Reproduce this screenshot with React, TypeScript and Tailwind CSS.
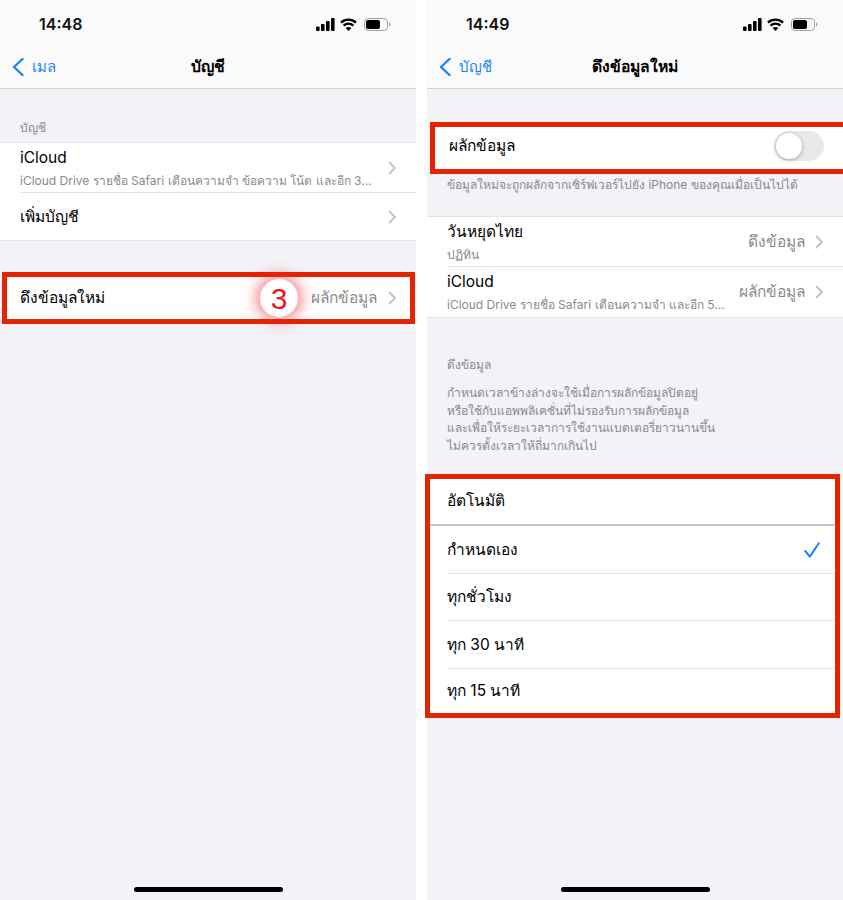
import React from "react";

const FONT = "font-['Inter','Noto_Sans','Liberation_Sans',sans-serif]";

function StatusIcons() {
  return (
    <div className="flex items-center gap-[5px]">
      <svg width="19" height="13" viewBox="0 0 19 13" fill="#000">
        <rect x="0" y="8.5" width="3.6" height="4.5" rx="0.9" />
        <rect x="5" y="6" width="3.6" height="7" rx="0.9" />
        <rect x="10" y="3" width="3.6" height="10" rx="0.9" />
        <rect x="15" y="0" width="3.6" height="13" rx="0.9" />
      </svg>
      <svg width="17" height="13" viewBox="0 0 17 13" fill="none" stroke="#000" strokeWidth="2.4">
        <path d="M1 4.6C5.2 .6 11.8 .6 16 4.6" />
        <path d="M3.6 7.6C6.4 5 10.6 5 13.4 7.6" />
        <path d="M8.5 13L5.6 10c1.6-1.4 4.2-1.4 5.8 0z" fill="#000" stroke="none" />
      </svg>
      <svg width="27" height="13" viewBox="0 0 27 13" fill="none" className="ml-[2px]">
        <rect x="0.5" y="0.5" width="23" height="12" rx="3.5" stroke="#a3a3a3" />
        <rect x="2" y="2" width="14" height="9" rx="2" fill="#000" />
        <path d="M25 4.5c1 .3 1.4 1 1.4 2s-.4 1.7-1.4 2z" fill="#a3a3a3" />
      </svg>
    </div>
  );
}

function Chevron() {
  return (
    <svg width="8" height="14" viewBox="0 0 8 14" fill="none" stroke="#c4c4c7" strokeWidth="2" className="shrink-0">
      <path d="M1 1l6 6-6 6" />
    </svg>
  );
}

function Header({ time, back, title }: { time: string; back: string; title: string }) {
  return (
    <div className="h-[89px] shrink-0 bg-[#fafafa] border-b border-[#d1d1d4] flex flex-col">
      <div className="h-[47px] flex items-center justify-between pl-[39px] pr-[25px] pt-[1px]">
        <span className="text-[16px] font-semibold text-[#111]">{time}</span>
        <StatusIcons />
      </div>
      <div className="relative flex-1 flex items-center justify-center">
        <div className="absolute left-[12px] top-[9px] flex items-center gap-[8px]">
          <svg width="12" height="20" viewBox="0 0 12 20" fill="none" stroke="#1a84ff" strokeWidth="2.4" strokeLinecap="round" strokeLinejoin="round">
            <path d="M10.5 2L2 10l8.5 8" />
          </svg>
          <span className="text-[15px] text-[#1a84ff]">{back}</span>
        </div>
        <span className="text-[15.7px] font-semibold text-black -mt-[2px]">{title}</span>
      </div>
    </div>
  );
}

function Two({ title, sub, value, h }: { title: string; sub: string; value?: string; h: string }) {
  return (
    <div className={`${h} flex items-center pr-[20px]`}>
      <div className="flex-1 min-w-0 pt-[1px]">
        <div className="text-[15.5px] leading-[22px] text-black">{title}</div>
        <div className="mt-[3px] text-[12px] leading-[18px] text-[#8a8a8e] whitespace-nowrap">{sub}</div>
      </div>
      {value && <span className="text-[15.5px] text-[#8a8a8e] ml-[10px] mr-[10px] whitespace-nowrap">{value}</span>}
      {!value && <span className="w-[10px]" />}
      <Chevron />
    </div>
  );
}

function Left() {
  return (
    <div className="relative flex flex-col bg-[#f2f2f7] h-[900px]">
      <Header time="14:48" back="เมล" title="บัญชี" />
      <div className="pt-[30px] pl-[20px] h-[53px] text-[12px] leading-[18px] text-[#8a8a8e]">บัญชี</div>
      <div className="bg-white border-y border-[#e4e4e6] pl-[20px]">
        <div className="border-b border-[#e4e4e6]">
          <Two h="h-[49px]" title="iCloud" sub="iCloud Drive รายชื่อ Safari เตือนความจำ ข้อความ โน้ต และอีก 3..." />
        </div>
        <div className="h-[47px] flex items-center justify-between pr-[20px]">
          <span className="text-[15.5px] text-black">เพิ่มบัญชี</span>
          <Chevron />
        </div>
      </div>
      <div className="mt-[31px] ml-[2px] mr-[1px] h-[52px] bg-white border-[5px] border-[#e32400] pl-[13px] pr-[14px] flex items-center relative">
        <span className="flex-1 text-[15.5px] text-black">ดึงข้อมูลใหม่</span>
        <span className="text-[15.5px] text-[#8a8a8e] mr-[11px]">ผลักข้อมูล</span>
        <Chevron />
        <div className="absolute left-[253px] top-[2px] w-[38px] h-[38px] rounded-full bg-white flex items-center justify-center text-[#f0141e] text-[30px] shadow-[0_0_14px_4px_rgba(240,30,40,0.55)] font-['Liberation_Sans',sans-serif]">
          3
        </div>
      </div>
      <HomeBar />
    </div>
  );
}

function HomeBar() {
  return <div className="absolute left-[134px] bottom-[8px] w-[149px] h-[5px] rounded-full bg-black" />;
}

function Right() {
  const opts = [
    { t: "กำหนดเอง", h: "h-[48px]" },
    { t: "ทุกชั่วโมง", h: "h-[47px]" },
    { t: "ทุก 30 นาที", h: "h-[48px]" },
    { t: "ทุก 15 นาที", h: "h-[44px]" },
  ];
  return (
    <div className="relative flex flex-col bg-[#f2f2f7] h-[900px]">
      <Header time="14:49" back="บัญชี" title="ดึงข้อมูลใหม่" />
      <div className="h-[33px]" />
      <div className="h-[52px] ml-[3px] bg-white border-[5px] border-[#e32400] border-r-0 pl-[14px] pr-[19px] pb-[4px] flex items-center justify-between">
        <span className="text-[15.5px] text-black">ผลักข้อมูล</span>
        <div className="w-[50px] h-[30px] rounded-full bg-[#e9e9ea] p-[2px]">
          <div className="w-[26px] h-[26px] rounded-full bg-white shadow-[0_1px_4px_rgba(0,0,0,0.3)]" />
        </div>
      </div>
      <div className="h-[42px] pl-[20px] pt-[2px] text-[12px] leading-[18px] text-[#8a8a8e]">
        ข้อมูลใหม่จะถูกผลักจากเซิร์ฟเวอร์ไปยัง iPhone ของคุณเมื่อเป็นไปได้
      </div>
      <div className="bg-white border-y border-[#e4e4e6] pl-[20px]">
        <div className="border-b border-[#e4e4e6]">
          <Two h="h-[49px]" title="วันหยุดไทย" sub="ปฏิทิน" value="ดึงข้อมูล" />
        </div>
        <Two h="h-[50px]" title="iCloud" sub="iCloud Drive รายชื่อ Safari เตือนความจำ และอีก 5..." value="ผลักข้อมูล" />
      </div>
      <div className="pt-[38px] pl-[20px] text-[12px] leading-[18px] text-[#8a8a8e]">ดึงข้อมูล</div>
      <div className="pt-[10px] pl-[20px] text-[12px] leading-[17.5px] text-[#8a8a8e]">
        <div>กำหนดเวลาข้างล่างจะใช้เมื่อการผลักข้อมูลปิดอยู่</div>
        <div>หรือใช้กับแอพพลิเคชั่นที่ไม่รองรับการผลักข้อมูล</div>
        <div>และเพื่อให้ระยะเวลาการใช้งานแบตเตอรี่ยาวนานขึ้น</div>
        <div>ไม่ควรตั้งเวลาให้ถี่มากเกินไป</div>
      </div>
      <div className="mt-[20px] -ml-[2px] mr-[3px] bg-white border-[5px] border-[#e32400] flex flex-col">
        <div className="h-[47px] pl-[17px] pb-[2px] flex items-center border-b-2 border-[#c9c9cc] text-[15.5px] text-black">
          อัตโนมัติ
        </div>
        <div className="pl-[17px]">
          {opts.map((o, i) => (
            <div
              key={o.t}
              className={`${o.h} flex items-center justify-between pr-[15px] text-[15.5px] text-black ${i < 3 ? "border-b border-[#e4e4e6]" : ""}`}
            >
              <span>{o.t}</span>
              {i === 0 && (
                <svg width="16" height="16" viewBox="0 0 16 16" fill="none" stroke="#1a84ff" strokeWidth="2" strokeLinecap="round" strokeLinejoin="round">
                  <path d="M1.2 9l4.6 5.6L14.8 1.2" />
                </svg>
              )}
            </div>
          ))}
        </div>
      </div>
      <HomeBar />
    </div>
  );
}

export default function App() {
  return (
    <div className={`${FONT} w-[843px] h-[900px] bg-white grid grid-cols-[416px_416px] gap-x-[11px] overflow-hidden`}>
      <Left />
      <Right />
    </div>
  );
}
